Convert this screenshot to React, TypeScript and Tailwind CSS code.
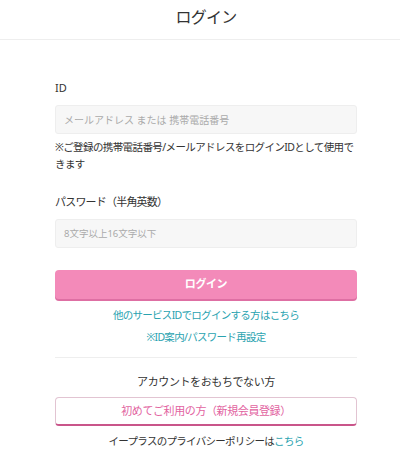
const App = () => {
    return (
        <div
            className="bg-white text-[#333] min-h-[462px]"
            style={{ fontFamily: '"Noto Sans", "Noto Sans CJK JP", sans-serif' }}
        >
            {/* Header */}
            <div className="h-[40px] border-b border-[#eeeeee] flex items-center justify-center pl-[12px]">
                <h1 className="text-[16px] tracking-[-0.8px] leading-none text-[#333] -mt-[6px]">ログイン</h1>
            </div>

            <div className="pl-[55px] pr-[43px] pt-[40px]">
                {/* ID */}
                <label className="block text-[11px] leading-[16px] mb-[9px]">ID</label>
                <input
                    type="text"
                    placeholder="メールアドレス または 携帯電話番号"
                    className="w-full h-[29px] px-[8px] bg-[#f7f7f7] border border-[#eeeeee] rounded-[3px] text-[10px] placeholder:text-[#aaa] outline-none"
                />
                <p className="text-[10.5px] tracking-[-0.6px] leading-[17px] mt-[5px]">
                    ※ご登録の携帯電話番号/メールアドレスをログインIDとして使用できます
                </p>

                {/* Password */}
                <label className="block text-[11px] tracking-[-0.8px] leading-[16px] mt-[21px] mb-[9px]">パスワード（半角英数）</label>
                <input
                    type="password"
                    placeholder="8文字以上16文字以下"
                    className="w-full h-[29px] px-[8px] bg-[#f7f7f7] border border-[#eeeeee] rounded-[3px] text-[9.5px] placeholder:text-[#aaa] outline-none"
                />

                <button className="mt-[22px] w-full h-[29px] rounded-[4px] bg-[#f38ab9] text-white text-[11px] tracking-[-0.4px] font-bold shadow-[0_2px_0_#de6fa3]">
                    ログイン
                </button>

                <div className="flex flex-col items-center mt-[8px] gap-[6px] text-[10.5px] tracking-[-0.7px] leading-[16px] text-[#2aa3b0]">
                    <a>他のサービスIDでログインする方はこちら</a>
                    <a>※ID案内/パスワード再設定</a>
                </div>

                {/* Divider */}
                <div className="h-px bg-[#eeeeee] mt-[12px]" />

                <p className="text-center text-[11px] tracking-[-0.4px] leading-[16px] mt-[16px]">アカウントをおもちでない方</p>

                <button className="mt-[7px] w-full h-[29px] rounded-[4px] bg-white border border-[#e2c4d2] border-b-2 border-b-[#c9558a] text-[#e2639f] text-[11px] tracking-[-0.4px]">
                    初めてご利用の方（新規会員登録）
                </button>

                <p className="text-center text-[10.5px] tracking-[-0.7px] leading-[16px] mt-[7px]">
                    イープラスのプライバシーポリシーは<a className="text-[#2aa3b0]">こちら</a>
                </p>
            </div>
        </div>
    );
};

export default App;
